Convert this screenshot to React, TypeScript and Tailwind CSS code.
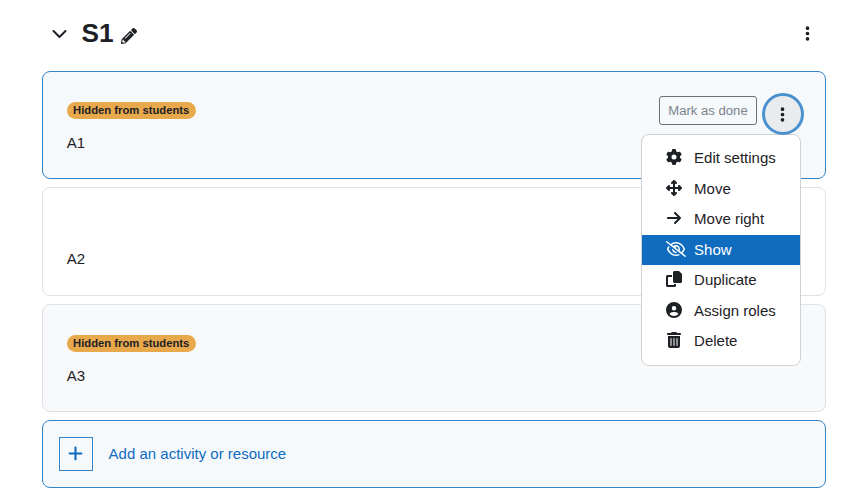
import type { SVGProps } from "react";
import type { IconType } from "react-icons";
import { FaPencilAlt } from "react-icons/fa";
import {
  FaArrowRight,
  FaArrowsUpDownLeftRight,
  FaChevronDown,
  FaCircleUser,
  FaEllipsisVertical,
  FaGear,
  FaPlus,
  FaRegEyeSlash,
  FaTrashCan,
} from "react-icons/fa6";

// Wide copy icon, the packaged one is narrower
const CopyIcon = (props: SVGProps<SVGSVGElement>) => (
  <svg viewBox="0 0 512 512" fill="currentColor" {...props}>
    <path d="M272 0h124c13 0 25 5 34 14l68 68c9 9 14 21 14 34v220c0 26.500-21.500 48-48 48H272c-26.500 0-48-21.500-48-48V48c0-26.500 21.500-48 48-48z" />
    <path d="M48 128h144v64H64v256h192v-32h64v48c0 26.500-21.500 48-48 48H48c-26.500 0-48-21.500-48-48V176c0-26.500 21.500-48 48-48z" />
  </svg>
);

interface MenuEntry {
  label: string;
  icon: IconType | typeof CopyIcon;
  active?: boolean;
}

const menuEntries: MenuEntry[] = [
  { label: "Edit settings", icon: FaGear },
  { label: "Move", icon: FaArrowsUpDownLeftRight },
  { label: "Move right", icon: FaArrowRight },
  { label: "Show", icon: FaRegEyeSlash, active: true },
  { label: "Duplicate", icon: CopyIcon },
  { label: "Assign roles", icon: FaCircleUser },
  { label: "Delete", icon: FaTrashCan },
];

const HiddenBadge = () => (
  <span className="flex h-[17px] w-[129px] items-center justify-center rounded-full bg-[#e8a94d] text-[11.25px] leading-none font-bold">
    Hidden from students
  </span>
);

const ActionMenu = () => (
  <div className="absolute top-[62.3px] right-[3px] z-10 w-40 rounded-lg border border-[#cfd1d4] bg-white py-2">
    {menuEntries.map(({ label, icon: Icon, active }) => (
      <button
        key={label}
        className={`flex h-[30.5px] w-full items-center pl-6 text-left ${
          active ? "bg-[#0f6cbf] text-white" : ""
        }`}
      >
        <span className="mr-[12.1px] mb-[3px] flex w-4 shrink-0">
          <Icon
            className={active ? "h-4 w-5 shrink-0" : "h-4 w-4 shrink-0"}
          />
        </span>
        {label}
      </button>
    ))}
  </div>
);

interface ActivityProps {
  name: string;
  hidden?: boolean;
  selected?: boolean;
}

const Activity = ({ name, hidden, selected }: ActivityProps) => (
  <li
    className={`flex h-[108.25px] justify-between rounded-lg border pr-6 pl-[23.75px] ${
      selected
        ? "border-[#3584c9] bg-[#f5f9fc]"
        : hidden
        ? "border-[#dee2e6] bg-[#f8f9fa]"
        : "border-[#dee2e6] bg-white"
    }`}
  >
    <div className="pt-[30.25px]">
      <div className="h-[17px]">{hidden && <HiddenBadge />}</div>
      <p className="mt-[12.75px] leading-[22.5px]">{name}</p>
    </div>
    {selected && (
      <div className="relative -mr-[3px] flex h-[42px] items-start gap-[5px] pt-[21px]">
        <button className="mt-[3px] h-[29px] w-[98px] shrink-0 rounded-[3px] border border-[#6a737b] text-[13.125px] text-[#7a828a]">
          Mark as done
        </button>
        <button className="relative z-20 flex h-[42px] w-[42px] shrink-0 items-center justify-center rounded-full border-3 border-[#4a90cf] bg-[#e9ecef] pr-px">
          <FaEllipsisVertical className="h-[17px] w-auto" />
        </button>
        <ActionMenu />
      </div>
    )}
  </li>
);

const App = () => {
  return (
    <main className="h-[488px] overflow-hidden bg-white pr-[34px] pl-[42px] font-['Liberation_Sans',Arial,sans-serif] text-[15px] text-[#1d2125]">
      <header className="flex h-[71px] items-center pb-[5px] pl-[9px]">
        <FaChevronDown className="h-4 w-[17px]" />
        <h3 className="ml-[13.6px] text-[26.25px] leading-8 font-bold">S1</h3>
        <FaPencilAlt className="mt-[5px] ml-[7.500px] h-4 w-auto" />
        <FaEllipsisVertical className="mr-[10px] ml-auto h-[17px] w-auto" />
      </header>

      <ul className="flex flex-col gap-2">
        <Activity name="A1" hidden selected />
        <Activity name="A2" />
        <Activity name="A3" hidden />
      </ul>

      <button className="mt-2 flex h-[68.25px] w-full items-center rounded-lg border border-[#3584c9] bg-[#f5f9fc] px-4 text-[#0f6cbf]">
        <span className="mr-[15.6px] flex h-[34px] w-[34px] items-center justify-center border border-[#3584c9] pr-px">
          <FaPlus className="h-[17px] w-auto" />
        </span>
        Add an activity or resource
      </button>
    </main>
  );
};

export default App;
